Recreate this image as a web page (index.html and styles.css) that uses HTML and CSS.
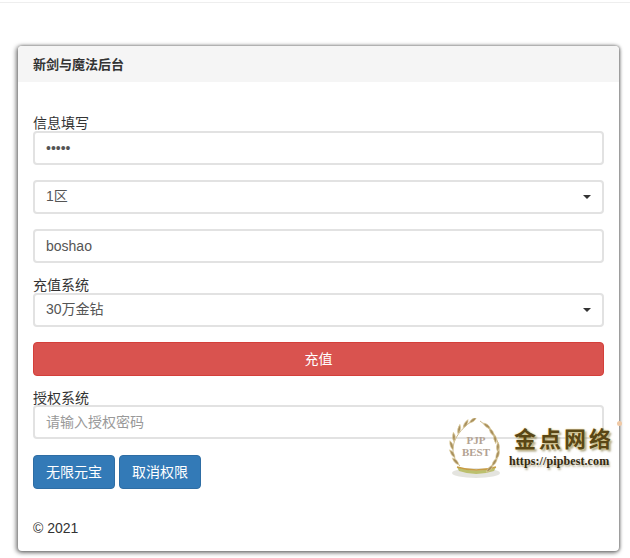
FILE: index.html
```html
<!DOCTYPE html>
<html lang="zh">
<head>
<meta charset="utf-8">
<title>新剑与魔法后台</title>
<link rel="stylesheet" href="styles.css">
</head>
<body>
<div class="topbar"></div>
<main class="panel">
  <header class="panel-heading">新剑与魔法后台</header>
  <div class="panel-body">
    <label class="label label-first">信息填写</label>
    <input class="control" type="password" value="12345">
    <div class="select-wrap gap">
      <select class="control select"><option>1区</option></select>
    </div>
    <input class="control gap" type="text" value="boshao">
    <label class="label label-mid">充值系统</label>
    <div class="select-wrap">
      <select class="control select"><option>30万金钻</option></select>
    </div>
    <button class="btn btn-danger" type="button">充值</button>
    <label class="label label-auth">授权系统</label>
    <input class="control" type="text" placeholder="请输入授权密码">
    <div class="btn-row">
      <button class="btn btn-primary" type="button">无限元宝</button>
      <button class="btn btn-primary" type="button">取消权限</button>
    </div>
    <footer class="copyright">© 2021</footer>
  </div>
</main>
<div class="watermark">
  <svg class="wreath" width="60" height="62" viewBox="0 0 60 62">
    <defs>
      <path id="leaf" d="M0 0 Q3 -4 9 -4 Q6 1 0 0 Z" fill="#a88f5c" stroke="#e2d3a6" stroke-width=".6"/>
    </defs>
    <ellipse cx="28" cy="55" rx="24" ry="5" fill="#d8d8d2" opacity=".7"/>
    <path d="M9 49 Q28 56 48 49 L46 53 Q28 59 11 53 Z" fill="#bcc06e"/>
    <path d="M9 49 Q28 55 48 49" fill="none" stroke="#c79c45" stroke-width="1.4"/>
    <path d="M12 48 C2 38 0 20 24 3" fill="none" stroke="#c9b88c" stroke-width="1"/>
    <path d="M44 48 C54 38 56 20 32 3" fill="none" stroke="#c9b88c" stroke-width="1"/>
    <use href="#leaf" transform="translate(11 47) rotate(-110)"/>
    <use href="#leaf" transform="translate(7 40) rotate(-100)"/>
    <use href="#leaf" transform="translate(5 32) rotate(-85)"/>
    <use href="#leaf" transform="translate(6 24) rotate(-70)"/>
    <use href="#leaf" transform="translate(10 16) rotate(-55)"/>
    <use href="#leaf" transform="translate(15 10) rotate(-35)"/>
    <use href="#leaf" transform="translate(21 5) rotate(-15)"/>
    <use href="#leaf" transform="translate(45 47) rotate(110) scale(-1 1) rotate(180)"/>
    <use href="#leaf" transform="translate(49 40) rotate(100) scale(-1 1) rotate(180)"/>
    <use href="#leaf" transform="translate(51 32) rotate(85) scale(-1 1) rotate(180)"/>
    <use href="#leaf" transform="translate(50 24) rotate(70) scale(-1 1) rotate(180)"/>
    <use href="#leaf" transform="translate(46 16) rotate(55) scale(-1 1) rotate(180)"/>
    <use href="#leaf" transform="translate(41 10) rotate(35) scale(-1 1) rotate(180)"/>
    <use href="#leaf" transform="translate(35 5) rotate(15) scale(-1 1) rotate(180)"/>
    <text x="28" y="26" text-anchor="middle" class="wreath-text">PJP</text>
    <text x="28" y="38" text-anchor="middle" class="wreath-text">BEST</text>
  </svg>
  <div class="wm-text">
    <div class="wm-title">金点网络</div>
    <div class="wm-url">https://pipbest.com</div>
  </div>
</div>
<span class="wm-dot"></span>
</body>
</html>
```

FILE: styles.css
```css
* { box-sizing: border-box; }
html, body { margin: 0; padding: 0; }
body {
  background: #fff;
  color: #333;
  font: 14px/20px "Liberation Sans", "Noto Sans CJK SC", sans-serif;
  height: 558px;
  overflow: hidden;
  position: relative;
}
.topbar {
  height: 3px;
  border-bottom: 1px solid #eee;
}
.panel {
  margin: 43px 0 0 18px;
  width: 601px;
  height: 505px;
  background: #fff;
  border-radius: 4px;
  box-shadow: -1px 1px 4px 1px rgba(0,0,0,.5), 1px 0 3px rgba(0,0,0,.35);
}
.panel-heading {
  height: 36px;
  padding: 9px 15px;
  background: #f5f5f5;
  font-weight: bold;
  font-size: 13px;
  color: #333;
  border-radius: 4px 4px 0 0;
}
.panel-body {
  padding: 0 15px;
  display: flex;
  flex-direction: column;
}
.label { display: block; height: 20px; line-height: 20px; }
.label-first { margin-top: 31px; margin-bottom: -2px; }
.label-mid { margin-top: 12px; margin-bottom: -2px; }
.label-auth { margin-top: 12px; margin-bottom: -3px; }
.control {
  display: block;
  width: 100%;
  height: 34px;
  padding: 6px 12px 6px 11px;
  border: 2px solid #e2e2e2;
  border-radius: 4px;
  background: #fff;
  color: #555;
  font: inherit;
  outline: none;
}
.control::placeholder { color: #999; opacity: 1; }
.select {
  appearance: none;
  -webkit-appearance: none;
  padding-top: 4px;
  padding-bottom: 8px;
}
.select-wrap { position: relative; }
.select-wrap::after {
  content: "";
  position: absolute;
  right: 13px;
  top: 15px;
  border: 4px solid transparent;
  border-top-color: #333;
  border-bottom: 0;
}
.gap { margin-top: 15px; }
.btn {
  display: inline-block;
  height: 34px;
  padding: 6px 12px;
  border: 1px solid transparent;
  border-radius: 4px;
  color: #fff;
  font: inherit;
}
.btn-danger {
  width: 100%;
  margin-top: 15px;
  background: #d9534f;
  border-color: #d43f3a;
}
.btn-primary {
  background: #337ab7;
  border-color: #2e6da4;
}
.btn-row {
  display: flex;
  gap: 4px;
  margin-top: 16px;
}
.copyright { margin-top: 29px; }
.watermark {
  position: absolute;
  left: 448px;
  top: 418px;
  display: flex;
  gap: 4px;
  align-items: flex-start;
}
.wreath-text {
  font: bold 11px "Liberation Serif", serif;
  fill: #b3a292;
}
.wm-text { padding-top: 6px; margin-left: -3px; }
.wm-title {
  font: bold 22px/27px "Noto Sans CJK SC", serif;
  letter-spacing: 3px;
  padding-left: 5px;
  color: #5a4716;
  text-shadow: 0 0 2px #e6cd73, 2px 2px 2px rgba(120,110,60,.6);
}
.wm-url {
  margin-top: 3px;
  font: bold 12px/15px "Liberation Serif", serif;
  letter-spacing: .1px;
  color: #33290f;
  text-shadow: 1px 2px 2px rgba(130,120,70,.6);
}
.wm-dot {
  position: absolute;
  left: 617px;
  top: 421px;
  width: 5px;
  height: 5px;
  border-radius: 50%;
  background: #f0c9a5;
}
```
